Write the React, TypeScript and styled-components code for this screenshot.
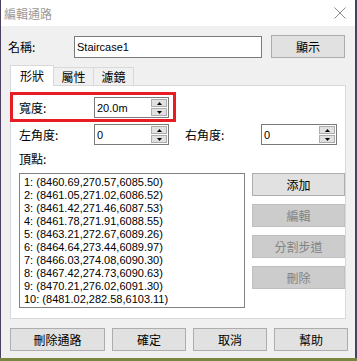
import React from "react";
import styled, { createGlobalStyle, css } from "styled-components";

const GlobalStyle = createGlobalStyle`
  html, body {
    margin: 0;
    padding: 0;
  }
  body {
    width: 357px;
    height: 361px;
    overflow: hidden;
    background: linear-gradient(to bottom, #4b4060 0, #4b4060 358px, #7a8640 358px);
    font-family: "Liberation Sans", "Noto Sans CJK TC", sans-serif;
  }
`;

const cjk = `"Noto Sans CJK TC", "Liberation Sans", sans-serif`;
const latin = `"Liberation Sans", "Noto Sans CJK TC", sans-serif`;

const Window = styled.div`
  margin-left: 1px;
  width: 354px;
  height: 358px;
  background: #f0f0f0;
  display: flex;
  flex-direction: column;
`;

const TitleBar = styled.div`
  height: 26px;
  flex: none;
  background: #ffffff;
  display: flex;
  align-items: center;
  justify-content: space-between;
  padding: 0 9px 0 3px;
  box-sizing: border-box;
`;

const TitleText = styled.span`
  font-family: ${cjk};
  font-size: 12px;
  color: #9a9a9a;
  line-height: 14px;
  margin-top: 1px;
`;

const Body = styled.div`
  display: flex;
  flex-direction: column;
  padding-top: 9px;
`;

const NameRow = styled.div`
  display: flex;
  align-items: center;
  height: 23px;
  padding-left: 7px;
`;

const Label = styled.span<{ $w?: number }>`
  font-family: ${cjk};
  font-size: 12px;
  line-height: 14px;
  color: #000;
  flex: none;
  width: ${(p) => (p.$w ? `${p.$w}px` : "auto")};
`;

const TextInput = styled.div`
  width: 188px;
  height: 22px;
  box-sizing: border-box;
  border: 1px solid #7a7a7a;
  background: #fff;
  display: flex;
  align-items: center;
  padding-left: 2px;
  font-family: ${latin};
  font-size: 11px;
  color: #000;
`;

const Button = styled.div<{ $w: number; $disabled?: boolean }>`
  width: ${(p) => p.$w}px;
  height: 23px;
  flex: none;
  box-sizing: border-box;
  border: 1px solid #adadad;
  background: #e1e1e1;
  display: flex;
  align-items: center;
  justify-content: center;
  font-family: ${cjk};
  font-size: 12px;
  color: #000;
  ${(p) =>
    p.$disabled &&
    css`
      background: #cccccc;
      border-color: #bfbfbf;
      color: #838383;
    `}
`;

const TabRow = styled.div`
  display: flex;
  align-items: flex-end;
  padding-left: 9px;
  margin-top: 7px;
`;

const Tab = styled.div<{ $active?: boolean; $w: number }>`
  width: ${(p) => p.$w}px;
  box-sizing: border-box;
  border: 1px solid #d9d9d9;
  border-bottom: none;
  display: flex;
  align-items: center;
  justify-content: center;
  font-family: ${cjk};
  font-size: 12px;
  color: #000;
  ${(p) =>
    p.$active
      ? css`
          height: 21px;
          margin-bottom: -1px;
          background: #fff;
          position: relative;
          z-index: 1;
          padding-bottom: 1px;
        `
      : css`
          height: 18px;
          background: #f0f0f0;
          border-left: none;
        `}
`;

const Panel = styled.div`
  margin: 0 9px;
  height: 234px;
  box-sizing: border-box;
  border: 1px solid #d9d9d9;
  background: #fff;
  display: flex;
  flex-direction: column;
`;

const Highlight = styled.div`
  margin: 6px 0 0 -1px;
  width: 166px;
  height: 30px;
  box-sizing: border-box;
  border: 3px solid #e81c24;
  display: flex;
  align-items: center;
  padding: 1px 0 0 6px;
`;

const FieldRow = styled.div`
  display: flex;
  align-items: center;
  height: 21px;
  margin-top: 2px;
  padding-left: 8px;
`;

const Spinner = styled.div<{ $w: number }>`
  width: ${(p) => p.$w}px;
  height: 21px;
  box-sizing: border-box;
  border: 1px solid #7a7a7a;
  background: #fff;
  display: flex;
  align-items: center;
  flex: none;
  padding: 0 1px 0 2px;
`;

const SpinValue = styled.span`
  flex: 1;
  font-family: ${latin};
  font-size: 11px;
  color: #000;
`;

const SpinButtons = styled.div`
  display: flex;
  flex-direction: column;
  gap: 1px;
  align-self: flex-start;
  margin-top: 1px;
`;

const SpinButton = styled.div`
  width: 16px;
  height: 8px;
  box-sizing: border-box;
  border: 1px solid #adadad;
  background: #e1e1e1;
  display: flex;
  align-items: center;
  justify-content: center;
`;

const SectionLabel = styled.div`
  margin-top: 7px;
  padding-left: 8px;
  height: 14px;
  display: flex;
  align-items: center;
`;

const ListArea = styled.div`
  display: flex;
  margin-top: 7px;
  padding-left: 8px;
`;

const ListBox = styled.div`
  width: 226px;
  height: 135px;
  box-sizing: border-box;
  border: 1px solid #828282;
  background: #fff;
  padding: 2px 0 0 4px;
  display: flex;
  flex-direction: column;
`;

const ListItem = styled.div`
  font-family: ${latin};
  font-size: 11px;
  line-height: 13px;
  height: 13px;
  color: #000;
  white-space: nowrap;
`;

const SideButtons = styled.div`
  display: flex;
  flex-direction: column;
  gap: 8px;
  margin-left: 7px;
`;

const BottomRow = styled.div`
  display: flex;
  gap: 7px;
  margin-top: 9px;
  padding-left: 9px;
`;

const Spacer = styled.div<{ $w: number }>`
  width: ${(p) => p.$w}px;
  flex: none;
`;

const CloseIcon = () => (
  <svg width="12" height="12" viewBox="0 0 12 12">
    <path d="M0.5 0.5 L11.5 11.5 M11.5 0.5 L0.5 11.5" stroke="#8c8c8c" strokeWidth="1" fill="none" />
  </svg>
);

const Arrow = ({ up }: { up?: boolean }) => (
  <svg width="5" height="3" viewBox="0 0 5 3">
    <polygon points={up ? "2.5,0 5,3 0,3" : "0,0 5,0 2.5,3"} fill="#000" />
  </svg>
);

const Spin = ({ value, w }: { value: string; w: number }) => (
  <Spinner $w={w}>
    <SpinValue>{value}</SpinValue>
    <SpinButtons>
      <SpinButton>
        <Arrow up />
      </SpinButton>
      <SpinButton>
        <Arrow />
      </SpinButton>
    </SpinButtons>
  </Spinner>
);

const vertices = [
  "1: (8460.69,270.57,6085.50)",
  "2: (8461.05,271.02,6086.52)",
  "3: (8461.42,271.46,6087.53)",
  "4: (8461.78,271.91,6088.55)",
  "5: (8463.21,272.67,6089.26)",
  "6: (8464.64,273.44,6089.97)",
  "7: (8466.03,274.08,6090.30)",
  "8: (8467.42,274.73,6090.63)",
  "9: (8470.21,276.02,6091.30)",
  "10: (8481.02,282.58,6103.11)",
];

export default function App() {
  return (
    <>
      <GlobalStyle />
      <Window>
        <TitleBar>
          <TitleText>編輯通路</TitleText>
          <CloseIcon />
        </TitleBar>
        <Body>
          <NameRow>
            <Label $w={66}>名稱:</Label>
            <TextInput>Staircase1</TextInput>
            <Spacer $w={9} />
            <Button $w={74}>顯示</Button>
          </NameRow>
          <TabRow>
            <Tab $active $w={44}>形狀</Tab>
            <Tab $w={40}>屬性</Tab>
            <Tab $w={40}>濾鏡</Tab>
          </TabRow>
          <Panel>
            <Highlight>
              <Label $w={75}>寬度:</Label>
              <Spin value="20.0m" w={75} />
            </Highlight>
            <FieldRow>
              <Label $w={75}>左角度:</Label>
              <Spin value="0" w={75} />
              <Spacer $w={16} />
              <Label $w={76}>右角度:</Label>
              <Spin value="0" w={76} />
            </FieldRow>
            <SectionLabel>
              <Label>頂點:</Label>
            </SectionLabel>
            <ListArea>
              <ListBox>
                {vertices.map((v) => (
                  <ListItem key={v}>{v}</ListItem>
                ))}
              </ListBox>
              <SideButtons>
                <Button $w={93}>添加</Button>
                <Button $w={93} $disabled>編輯</Button>
                <Button $w={93} $disabled>分割步道</Button>
                <Button $w={93} $disabled>刪除</Button>
              </SideButtons>
            </ListArea>
          </Panel>
          <BottomRow>
            <Button $w={95}>刪除通路</Button>
            <Button $w={74}>確定</Button>
            <Button $w={74}>取消</Button>
            <Button $w={74}>幫助</Button>
          </BottomRow>
        </Body>
      </Window>
    </>
  );
}
